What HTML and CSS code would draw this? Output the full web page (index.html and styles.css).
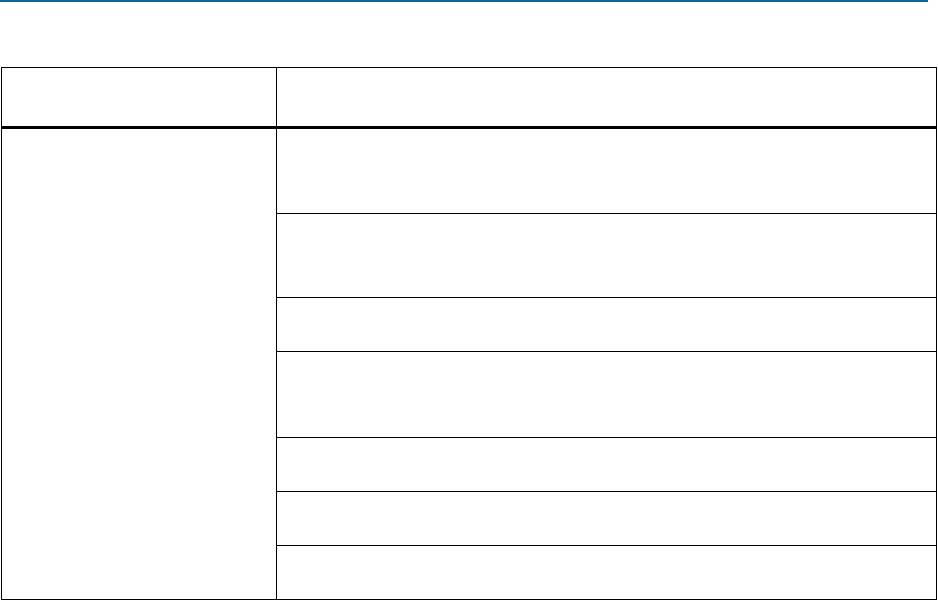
FILE: index.html
```html
<!DOCTYPE html>
<html lang="en">
<head>
<meta charset="utf-8">
<title>Table</title>
<link rel="stylesheet" href="styles.css">
</head>
<body>
<div class="rule"></div>
<div class="table">
  <div class="head">
    <div class="cell first"></div>
    <div class="cell"></div>
  </div>
  <div class="body">
    <div class="cell first"></div>
    <div class="rows">
      <div class="row r84"></div>
      <div class="row r83"></div>
      <div class="row r53"></div>
      <div class="row r85"></div>
      <div class="row r53"></div>
      <div class="row r53"></div>
      <div class="row r53"></div>
    </div>
  </div>
</div>
</body>
</html>
```
FILE: styles.css
```css
html, body {
  margin: 0;
  padding: 0;
  background: #fff;
  font-family: "Liberation Sans", Arial, sans-serif;
}
.rule {
  width: 928px;
  height: 2px;
  background: #0b6698;
}
.table {
  box-sizing: border-box;
  width: 936px;
  margin: 65px 0 0 1px;
  border: 1px solid #000;
}
.head {
  display: grid;
  grid-template-columns: 275px 1fr;
  height: 58px;
  border-bottom: 3px solid #000;
}
.body {
  display: grid;
  grid-template-columns: 275px 1fr;
}
.cell.first {
  border-right: 1px solid #000;
}
.rows {
  display: flex;
  flex-direction: column;
}
.row + .row {
  border-top: 1px solid #000;
}
.r84 { height: 84px; }
.r83 { height: 83px; }
.r85 { height: 85px; }
.r53 { height: 53px; }
```
